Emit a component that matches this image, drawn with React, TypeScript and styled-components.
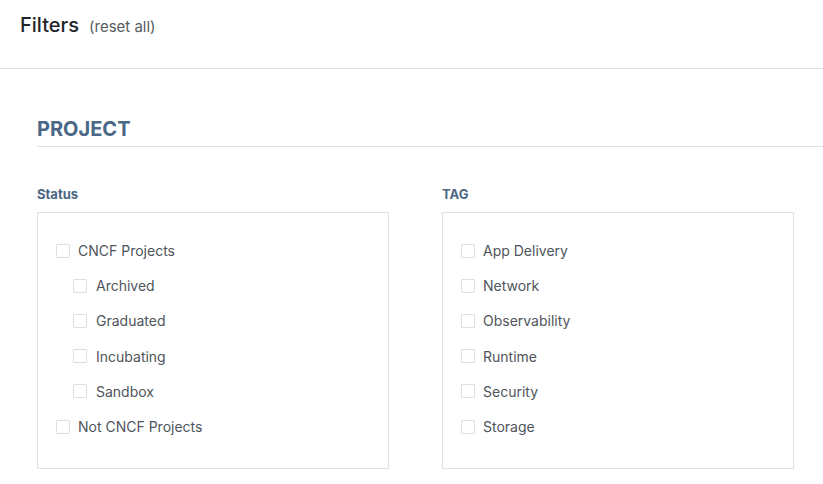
import styled, { createGlobalStyle } from "styled-components";

const GlobalStyle = createGlobalStyle`
  html, body {
    margin: 0;
    padding: 0;
    background: #fff;
    font-family: Inter, "Noto Sans", sans-serif;
  }
`;

const Page = styled.div`
  width: 823px;
  height: 484px;
  overflow: hidden;
`;

const Header = styled.div`
  display: flex;
  align-items: baseline;
  gap: 10px;
  height: 69px;
  box-sizing: border-box;
  padding: 13px 20px 0;
  border-bottom: 1px solid #dee2e6;
`;

const Title = styled.h1`
  margin: 0;
  font-size: 20px;
  font-weight: 500;
  color: #212529;
`;

const Reset = styled.span`
  font-size: 15px;
  color: #555b61;
`;

const Section = styled.div`
  padding: 48px 0 0 37px;
`;

const SectionTitle = styled.h2`
  margin: 0;
  padding-bottom: 5px;
  font-size: 20px;
  font-weight: 700;
  color: #4a6785;
  border-bottom: 1px solid #dee2e6;
`;

const Columns = styled.div`
  display: grid;
  grid-template-columns: 352px 352px;
  column-gap: 53px;
  padding-top: 38px;
`;

const Group = styled.div`
  display: flex;
  flex-direction: column;
`;

const GroupLabel = styled.div`
  font-size: 13px;
  font-weight: 700;
  color: #4a6785;
  height: 19px;
  line-height: 19px;
  margin-bottom: 8px;
`;

const Box = styled.div`
  height: 257px;
  box-sizing: border-box;
  border: 1px solid #dee2e6;
  padding: 20px 0 0 18px;
  display: flex;
  flex-direction: column;
`;

const Row = styled.label<{ $indent?: boolean }>`
  display: flex;
  align-items: center;
  gap: 8px;
  height: 35.2px;
  padding-left: ${(p) => (p.$indent ? "17px" : "0")};
  font-size: 14px;
  color: #4f555b;
  & > span:first-child {
    margin-right: ${(p) => (p.$indent ? "1px" : "0")};
  }
`;

const Check = styled.span`
  width: 14px;
  height: 14px;
  box-sizing: border-box;
  border: 1px solid #dcdfe3;
  border-radius: 1px;
  background: #fff;
  flex: none;
`;

const status = [
  { name: "CNCF Projects" },
  { name: "Archived", indent: true },
  { name: "Graduated", indent: true },
  { name: "Incubating", indent: true },
  { name: "Sandbox", indent: true },
  { name: "Not CNCF Projects" },
];

const tags = ["App Delivery", "Network", "Observability", "Runtime", "Security", "Storage"];

export default function App() {
  return (
    <Page>
      <GlobalStyle />
      <Header>
        <Title>Filters</Title>
        <Reset>(reset all)</Reset>
      </Header>
      <Section>
        <SectionTitle>PROJECT</SectionTitle>
        <Columns>
          <Group>
            <GroupLabel>Status</GroupLabel>
            <Box>
              {status.map((s) => (
                <Row key={s.name} $indent={s.indent}>
                  <Check />
                  {s.name}
                </Row>
              ))}
            </Box>
          </Group>
          <Group>
            <GroupLabel>TAG</GroupLabel>
            <Box>
              {tags.map((t) => (
                <Row key={t}>
                  <Check />
                  {t}
                </Row>
              ))}
            </Box>
          </Group>
        </Columns>
      </Section>
    </Page>
  );
}
